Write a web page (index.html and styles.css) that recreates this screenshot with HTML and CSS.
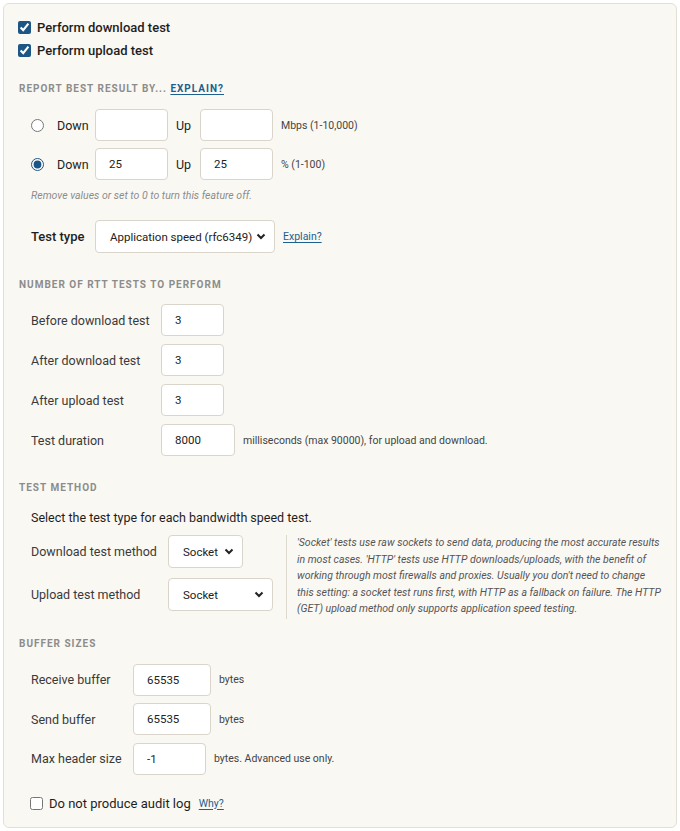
FILE: index.html
```html
<!DOCTYPE html>
<html lang="en">
<head>
    <meta charset="UTF-8">
    <meta name="viewport" content="width=device-width, initial-scale=1.0">
    <title>Speed test settings</title>
    <link rel="stylesheet" href="styles.css">
</head>
<body>

<div class="panel">
    <label class="check strong"><input type="checkbox" checked> Perform download test</label>
    <label class="check strong"><input type="checkbox" checked> Perform upload test</label>

    <h3 class="section-title first">Report best result by... <a href="#">Explain?</a></h3>
    <div class="indent">
        <div class="best-row">
            <input type="radio" name="best">
            <span class="best-label">Down</span>
            <input type="text" class="field w73">
            <span class="up-label">Up</span>
            <input type="text" class="field w73">
            <span class="unit">Mbps (1-10,000)</span>
        </div>
        <div class="best-row">
            <input type="radio" name="best" checked>
            <span class="best-label">Down</span>
            <input type="text" class="field w73" value="25">
            <span class="up-label">Up</span>
            <input type="text" class="field w73" value="25">
            <span class="unit">% (1-100)</span>
        </div>
        <p class="note">Remove values or set to 0 to turn this feature off.</p>

        <div class="type-row">
            <label class="type-label">Test type</label>
            <select class="select w180">
                <option>Application speed (rfc6349)</option>
            </select>
            <a href="#" class="small-link">Explain?</a>
        </div>
    </div>

    <h3 class="section-title">Number of RTT tests to perform</h3>
    <div class="indent rows rtt-rows">
        <div class="row">
            <label class="row-label rtt">Before download test</label>
            <input type="text" class="field w63" value="3">
        </div>
        <div class="row">
            <label class="row-label rtt">After download test</label>
            <input type="text" class="field w63" value="3">
        </div>
        <div class="row">
            <label class="row-label rtt">After upload test</label>
            <input type="text" class="field w63" value="3">
        </div>
        <div class="row">
            <label class="row-label rtt">Test duration</label>
            <input type="text" class="field w74" value="8000">
            <span class="unit">milliseconds (max 90000), for upload and download.</span>
        </div>
    </div>

    <h3 class="section-title">Test method</h3>
    <div class="indent">
        <p class="lead">Select the test type for each bandwidth speed test.</p>
        <div class="method">
            <div class="method-rows">
                <div class="row">
                    <label class="row-label method-label">Download test method</label>
                    <select class="select w75"><option>Socket</option></select>
                </div>
                <div class="row">
                    <label class="row-label method-label">Upload test method</label>
                    <select class="select w105"><option>Socket</option></select>
                </div>
            </div>
            <p class="help">'Socket' tests use raw sockets to send data, producing the most accurate results in most cases. 'HTTP' tests use HTTP downloads/uploads, with the benefit of working through most firewalls and proxies. Usually you don't need to change this setting: a socket test runs first, with HTTP as a fallback on failure. The HTTP (GET) upload method only supports application speed testing.</p>
        </div>
    </div>

    <h3 class="section-title buffers">Buffer sizes</h3>
    <div class="indent rows buf-rows">
        <div class="row">
            <label class="row-label buf">Receive buffer</label>
            <input type="text" class="field w78" value="65535">
            <span class="unit">bytes</span>
        </div>
        <div class="row">
            <label class="row-label buf">Send buffer</label>
            <input type="text" class="field w78" value="65535">
            <span class="unit">bytes</span>
        </div>
        <div class="row">
            <label class="row-label buf">Max header size</label>
            <input type="text" class="field w73" value="-1">
            <span class="unit">bytes. Advanced use only.</span>
        </div>
    </div>

    <div class="indent audit">
        <label class="check"><input type="checkbox"> Do not produce audit log</label>
        <a href="#" class="small-link">Why?</a>
    </div>
</div>

</body>
</html>
```

FILE: styles.css
```css
/* General Styles */
body {
    margin: 0;
    padding: 3px;
    background: #fff;
    font-family: 'Roboto', 'Noto Sans', sans-serif;
    font-size: 12.5px;
    color: #333;
}

.panel {
    background: #faf8f3;
    border: 1px solid #e3dfd5;
    border-radius: 6px;
    padding: 13px 12px 14px 15px;
    width: 645px;
}

/* Checkboxes */
.check {
    display: flex;
    align-items: center;
    height: 20px;
    color: #1e1e1e;
    white-space: nowrap;
}

.check + .check {
    margin-top: 3px;
}

.check input {
    margin: 0 6px 0 -1px;
    width: 13px;
    height: 13px;
    accent-color: #1d5584;
}

.strong {
    font-weight: 500;
    font-size: 13px;
}

/* Section titles */
.section-title {
    margin: 25px 0 0;
    height: 14px;
    line-height: 14px;
    font-size: 10px;
    font-weight: bold;
    letter-spacing: 1px;
    text-transform: uppercase;
    color: #8c8c8c;
}

.section-title.first {
    margin-top: 22px;
}

.section-title.buffers {
    margin-top: 18px;
}

.section-title a {
    color: #1d5f8f;
    text-decoration: underline;
    text-underline-offset: 2px;
}

.indent {
    margin-left: 12px;
}

/* Report best result */
.best-row {
    display: flex;
    align-items: center;
    margin-top: 13px;
}

.best-row + .best-row {
    margin-top: 7px;
}

.best-row input[type="radio"] {
    margin: 0 13px 0 0;
    width: 13px;
    height: 13px;
    accent-color: #1d5584;
}

.best-label {
    width: 38px;
    color: #1e1e1e;
}

.up-label {
    width: 24px;
    margin-left: 8px;
    color: #1e1e1e;
}

.field {
    box-sizing: border-box;
    height: 32px;
    border: 1px solid #d9d5ca;
    border-radius: 4px;
    background: #fff;
    padding: 0 13px;
    font-family: inherit;
    font-size: 11.5px;
    color: #222;
    outline: none;
}

.w63 { width: 63px; }
.w73 { width: 73px; }
.w74 { width: 74px; }
.w78 { width: 78px; }

.unit {
    font-size: 10.5px;
    color: #444;
    margin-left: 8px;
    white-space: nowrap;
}

.note {
    margin: 8px 0 0;
    line-height: 16px;
    font-size: 10.5px;
    font-style: italic;
    color: #8c8c8c;
}

/* Test type */
.type-row {
    display: flex;
    align-items: center;
    margin-top: 16px;
}

.type-label {
    width: 64px;
    font-weight: 500;
    font-size: 13px;
    color: #1e1e1e;
}

.select {
    box-sizing: border-box;
    height: 33px;
    appearance: none;
    border: 1px solid #d9d5ca;
    border-radius: 4px;
    padding: 0 20px 0 14px;
    font-family: inherit;
    font-size: 11.5px;
    color: #222;
    background: #fff url("data:image/svg+xml,%3Csvg xmlns='http://www.w3.org/2000/svg' width='10' height='7' viewBox='0 0 10 7'%3E%3Cpath d='M1.5 1.5 5 5 8.5 1.5' fill='none' stroke='%23222' stroke-width='2'/%3E%3C/svg%3E") no-repeat right 8px center;
    outline: none;
}

.w180 { width: 180px; }
.w75 { width: 75px; }
.w105 { width: 105px; }

.small-link {
    margin-left: 8px;
    font-size: 10.5px;
    color: #1d5f8f;
    text-decoration: underline;
    text-underline-offset: 2px;
}

/* Rows with a label column */
.row {
    display: flex;
    align-items: center;
}

.rtt-rows {
    margin-top: 12px;
}

.rtt-rows .row + .row {
    margin-top: 8px;
}

.buf-rows {
    margin-top: 13px;
}

.buf-rows .row + .row {
    margin-top: 7.5px;
}

.row-label {
    color: #3a3a3a;
    white-space: nowrap;
}

.rtt { width: 130px; }
.buf { width: 102px; }
.method-label { width: 137px; }

/* Test method */
.lead {
    margin: 14px 0 8px;
    line-height: 18px;
    color: #1e1e1e;
}

.method {
    display: flex;
    align-items: flex-start;
}

.method-rows {
    width: 255px;
    flex-shrink: 0;
}

.method-rows .row + .row {
    margin-top: 10px;
}

.help {
    margin: 0;
    padding: 0 0 1px 10px;
    border-left: 1px solid #ddd9cf;
    line-height: 16.5px;
    font-size: 10.5px;
    font-style: italic;
    color: #555;
}

/* Audit */
.audit {
    display: flex;
    align-items: center;
    margin-top: 18.5px;
}

.audit .check {
    color: #1e1e1e;
    font-size: 13px;
}
```
